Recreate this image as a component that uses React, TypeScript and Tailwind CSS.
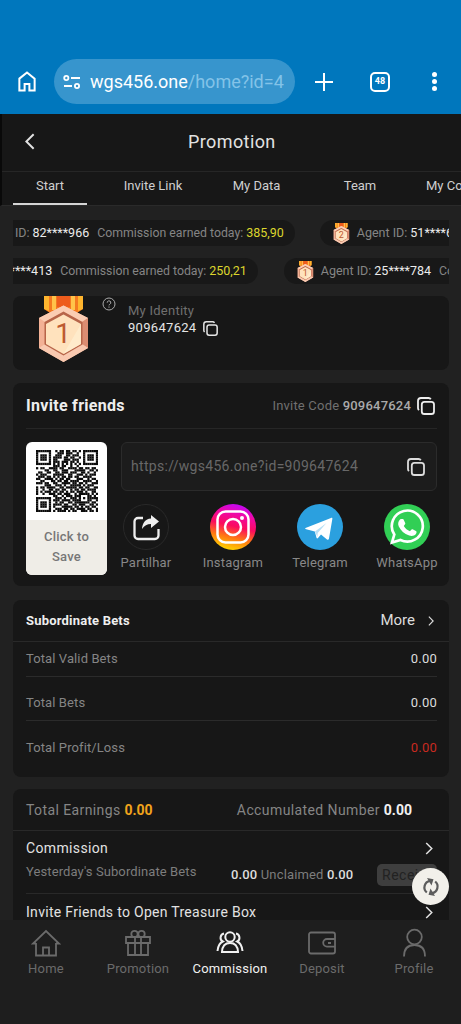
import type { ReactNode } from 'react'

const QR_ROWS = [
  '11111110010110110110101111111',
  '10000010001110111001001000001',
  '10111010011100110111001011101',
  '10111010111101101100101011101',
  '10111010110001110111001011101',
  '10000010111011101101001000001',
  '11111110101010101010101111111',
  '00000000111011001001000000000',
  '10110011110110011110110110110',
  '00001100110011100011111001101',
  '01100110011011101110011010010',
  '10111000111110011001110101110',
  '01110110101011011011001111000',
  '11001111010110110001110010110',
  '00110001101101101111001111001',
  '11101100110011110110110100111',
  '00001110011101001111101011100',
  '10110111100110111110110110011',
  '10010011011011001011011011110',
  '10101110110110101101110100110',
  '10010011101101110010111110101',
  '00000000110010111011100011010',
  '11111110011101001110101011111',
  '10000010111011110111100011001',
  '10111010010110011011111110110',
  '10111010111101100110111001101',
  '10111010100011111011010110110',
  '10000010011101101101111011001',
  '11111110101111010110011101101',
]

function QrCode() {
  return (
    <svg viewBox="0 0 29 29" className="size-[62px]">
      {QR_ROWS.map((row, y) =>
        row.split('').map((cell, x) =>
          cell === '1' ? <rect key={`${x}-${y}`} x={x} y={y} width="1.050" height="1.050" fill="#0a0a0a" /> : null
        )
      )}
    </svg>
  )
}

function CopyIcon({ className }: { className: string }) {
  return (
    <svg viewBox="0 0 18 18" fill="none" stroke="currentColor" strokeWidth="1.8" className={className}>
      <rect x="4.8" y="4.8" width="12.2" height="12.2" rx="2.6" />
      <path d="M1.9 13.2A3 3 0 0 1 1 11V4a3 3 0 0 1 3-3h7.6a2.6 2.6 0 0 1 2.2 1.2" />
    </svg>
  )
}

function Chevron({ className }: { className: string }) {
  return (
    <svg viewBox="0 0 8 14" fill="none" stroke="currentColor" strokeWidth="1.6" className={className}>
      <path d="M1 1l6 6-6 6" />
    </svg>
  )
}

/** Hexagonal rank medal hanging on an orange ribbon */
function Medal({ rank, className }: { rank: number; className: string }) {
  return (
    <svg viewBox="0 0 50 66" className={className}>
      <path d="M5 0h39v13l-6 4H11l-6-4z" fill="#f47a20" />
      <path d="M5 0h5v15l-5-2zM39 0h5v13l-5 2z" fill="#ffb52e" />
      <path d="M13 0h4v14h-4zM32 0h4v14h-4z" fill="#ffc34a" />
      <path d="M18 0h13v11H18z" fill="#ee5c1c" />
      <path d="M24.500 9.500L49 22v30L24.500 66 0 52V22z" fill="#f3b195" />
      <path d="M24.500 9.500L49 22l-6 4-18.500-10L6 26l-6-4z" fill="#fbcdb3" />
      <path d="M49 22v30l-6-4V26z" fill="#dc8d72" />
      <path d="M24.500 66L49 52l-6-4-18.500 11L6 48l-6 4z" fill="#f9c9b0" />
      <path d="M24.500 15.500L43.500 26v22.500L24.500 59.500 5.500 48.500V26z" fill="#b76549" />
      <path d="M24.500 18.500L42 28v20L24.500 58 7 48V28z" fill="#ffe2bd" />
      <path d="M42 28v20L24.500 58z" fill="#fff0d2" opacity=".7" />
      <text x="24" y="47" textAnchor="middle" fontFamily="Roboto, sans-serif" fontSize="28" fontWeight="400" fill="#bd5a30">
        {rank}
      </text>
    </svg>
  )
}

function TickerPill({ rank, id, amount }: { rank: number; id: string; amount: string }) {
  return (
    <div className="flex h-[26px] shrink-0 items-center rounded-full bg-[#181818] pr-[11px] pl-[13px] text-[12.5px] whitespace-nowrap text-[#858585]">
      <Medal rank={rank} className="mr-[7px] h-[21px] w-[17px]" />
      <span>Agent ID:</span>
      <span className="ml-[3px] text-[#ececec]">{id}</span>
      <span className="ml-2 w-[146px] text-[12.3px]">Commission earned today:</span>
      <span className="ml-[3px] text-[#dcd52d]">{amount}</span>
    </div>
  )
}

function Share({ label, children }: { label: string; children: ReactNode }) {
  return (
    <div className="flex w-[64px] flex-col items-center">
      <div className="size-[46px]">{children}</div>
      <span className="mt-px text-[13px] leading-6 tracking-[0.2px] text-[#888]">{label}</span>
    </div>
  )
}

function BetRow({ label, value, className }: { label: string; value: string; className: string }) {
  return (
    <div className={`flex items-center justify-between text-[13px] ${className}`}>
      <span className="tracking-[0.1px] text-[#858585]">{label}</span>
      <span className="tracking-[0.2px]">{value}</span>
    </div>
  )
}

function NavItem({ label, active, children }: { label: string; active?: boolean; children: ReactNode }) {
  return (
    <div className={`flex w-[92px] flex-col items-center ${active ? 'text-[#f1f1f1]' : 'text-[#6b6b6b]'}`}>
      <svg viewBox="0 0 30 30" fill="none" stroke="currentColor" strokeWidth="1.8" className="size-[30px]">
        {children}
      </svg>
      <span className="mt-px text-[13px] leading-5 tracking-[0.2px]">{label}</span>
    </div>
  )
}

function BrowserBar() {
  return (
    <div className="flex h-[114px] shrink-0 items-end bg-[#0077bd] pb-[10px] pl-[17px] text-white">
      <div className="flex h-[45px] items-center">
        <svg viewBox="0 0 20 22" fill="none" stroke="currentColor" strokeWidth="2.100" className="h-[21px] w-5">
          <path d="M2 8l8-6.500L18 8v12.500h-5.500v-7h-5v7H2z" />
        </svg>
        <div className="ml-[17px] flex h-[45px] w-[241px] items-center rounded-full bg-[#3795cd] pl-[9px]">
          <svg viewBox="0 0 18 14" fill="none" stroke="currentColor" strokeWidth="1.800" className="h-[14px] w-[18px]">
            <circle cx="3.300" cy="3" r="2.100" />
            <path d="M8 3h9M1 11h8" />
            <circle cx="14" cy="11" r="2.100" />
          </svg>
          <span className="ml-[9px] text-[18px] whitespace-nowrap">
            wgs456.one<span className="text-[#83c3e8]">/home?id=4</span>
          </span>
        </div>
        <svg viewBox="0 0 18 18" stroke="currentColor" strokeWidth="2" className="ml-5 size-[18px]">
          <path d="M9 0v18M0 9h18" />
        </svg>
        <div className="ml-[37px] flex size-5 items-center justify-center rounded-[5px] border-2 border-white text-[9px] font-bold">48</div>
        <div className="ml-[42px] flex flex-col gap-[2px]">
          <i className="size-[5px] rounded-full bg-white" />
          <i className="size-[5px] rounded-full bg-white" />
          <i className="size-[5px] rounded-full bg-white" />
        </div>
      </div>
    </div>
  )
}

function PageHeader() {
  return (
    <header className="h-[92px] shrink-0 overflow-hidden border-b border-l-2 border-b-[#2a2a2a] border-l-[#090909] bg-[#171717] text-[#e2e2e2]">
      <div className="flex h-[58px] items-center border-b border-[#262626] pb-[2px]">
        <Chevron className="ml-[23px] h-[17px] w-[10px] rotate-180" />
        <h1 className="ml-[153px] text-[18px] tracking-[0.4px]">Promotion</h1>
      </div>
      <nav className="flex h-[33px] text-[13px] whitespace-nowrap text-[#cfcfcf]">
        <span className="ml-[11px] w-[74px] shrink-0 border-b-2 border-[#d5d5d5] pt-1 text-center leading-5">Start</span>
        <span className="w-[132px] shrink-0 pt-1 text-center leading-5">Invite Link</span>
        <span className="w-[75px] shrink-0 pt-1 text-center leading-5">My Data</span>
        <span className="w-[132px] shrink-0 pt-1 text-center leading-5">Team</span>
        <span className="shrink-0 pt-1 leading-5">My Commission</span>
      </nav>
    </header>
  )
}

export default function App() {
  return (
    <div className="relative flex h-[1024px] w-[461px] flex-col overflow-hidden bg-[#212121] font-[Roboto,sans-serif]">
      <BrowserBar />
      <PageHeader />

      <main className="mx-[13px] flex h-[714px] w-[436px] flex-col overflow-hidden pt-[14px]">
        {/* Commission tickers */}
        <div className="flex h-[26px] shrink-0 overflow-hidden">
          <div className="-ml-[71px] flex gap-[25px]">
            <TickerPill rank={1} id="82****966" amount="385,90" />
            <TickerPill rank={2} id="51****620" amount="312,40" />
          </div>
        </div>
        <div className="mt-[12px] flex h-[26px] shrink-0 overflow-hidden">
          <div className="-ml-[108px] flex gap-[26px]">
            <TickerPill rank={3} id="37****413" amount="250,21" />
            <TickerPill rank={1} id="25****784" amount="198,35" />
          </div>
        </div>

        {/* Identity */}
        <section className="mt-[12px] flex h-[74px] shrink-0 rounded-lg bg-[#171717]">
          <Medal rank={1} className="ml-[26px] h-[66px] w-[50px]" />
          <svg viewBox="0 0 14 14" fill="none" stroke="#aaa" className="mt-px ml-[13px] size-[14px]">
            <circle cx="7" cy="7" r="6" />
            <path d="M5.200 5.700a1.800 1.800 0 1 1 2.700 1.500c-.7.400-.9.700-.9 1.200M7 9.500v1.200" />
          </svg>
          <div className="ml-3 pt-[6px] text-[13px] leading-[17px]">
            <p className="tracking-[0.25px] text-[#707070]">My Identity</p>
            <p className="flex items-center tracking-[0.3px] text-[#e5e5e5]">
              909647624
              <CopyIcon className="mt-[2px] ml-[7px] size-[15px]" />
            </p>
          </div>
        </section>

        {/* Invite friends */}
        <section className="mt-[13px] h-[203px] shrink-0 rounded-lg bg-[#171717] pr-3 pl-[13px]">
          <div className="flex h-[46px] items-center border-b border-[#262626] text-[#eee]">
            <h2 className="text-[16px] font-bold tracking-[0.3px]">Invite friends</h2>
            <span className="ml-auto text-[13px] tracking-[0.2px] text-[#707070]">
              Invite Code <b className="font-medium text-[#aaa]">909647624</b>
            </span>
            <CopyIcon className="mr-[2px] ml-[6px] size-[18px]" />
          </div>
          <div className="mt-[13px] flex">
            <div className="flex h-[133px] w-[81px] flex-col items-center overflow-hidden rounded-[6px] bg-white pt-2">
              <QrCode />
              <div className="mt-2 w-full flex-1 bg-[#efede7] pt-[7px] text-center text-[13px] leading-5 font-medium tracking-[0.2px] text-[#777]">
                Click to
                <br />
                Save
              </div>
            </div>
            <div className="ml-[14px] w-[316px]">
              <div className="flex h-[49px] items-center rounded-[6px] border border-[#2b2b2b] bg-[#1c1c1c] pr-[11px] pl-[9px] text-[14px] tracking-[0.3px] text-[#686868]">
                https://wgs456.one?id=909647624
                <CopyIcon className="ml-auto size-[18px] text-[#ddd]" />
              </div>
              <div className="mt-[13px] -mr-[2px] -ml-[7px] flex justify-between">
                <Share label="Partilhar">
                  <svg viewBox="0 0 46 46" fill="none">
                    <circle cx="23" cy="23" r="22.500" stroke="#292929" />
                    <path d="M20 14h-5a3.500 3.500 0 0 0-3.500 3.500v14A3.500 3.500 0 0 0 15 35h17a3.500 3.500 0 0 0 3.500-3.500V25" stroke="#eee" strokeWidth="2.300" />
                    <path d="M28 11l8 6.500-8 6.500v-4c-4 0-6.500 1.500-9 5 .5-6 3-10 9-10.500z" fill="#eee" />
                  </svg>
                </Share>
                <Share label="Instagram">
                  <svg viewBox="0 0 46 46" fill="none" stroke="#fff">
                    <defs>
                      <linearGradient id="ig" x1="0.250" y1="1" x2="0.500" y2="0">
                        <stop offset="0.050" stopColor="#ffd000" />
                        <stop offset="0.300" stopColor="#ff7a12" />
                        <stop offset="0.550" stopColor="#fb0b5f" />
                        <stop offset="0.800" stopColor="#f008a5" />
                        <stop offset="1" stopColor="#c608ef" />
                      </linearGradient>
                    </defs>
                    <circle cx="23" cy="23" r="23" fill="url(#ig)" stroke="none" />
                    <rect x="7.500" y="7.500" width="31" height="31" rx="8" strokeWidth="2.500" />
                    <circle cx="23" cy="23" r="8" strokeWidth="2.500" />
                    <circle cx="32" cy="14" r="2" fill="#fff" stroke="none" />
                  </svg>
                </Share>
                <Share label="Telegram">
                  <svg viewBox="0 0 46 46">
                    <circle cx="23" cy="23" r="23" fill="#2ba0df" />
                    <path d="M8.500 24L34 14c1-.4 1.600 0 1.300 1.300L32 34.500c-.2 1.200-1 1.400-2 .9l-6-4.800-3 3.500c-.6.600-1.300.5-1.500-.4l-1.700-6.200-8.600-2.300c-1.200-.4-1.200-.9-.7-1.200z" fill="#fff" />
                    <path d="M18 27.500L29.500 19 20.700 29l-.3 4z" fill="#b6dff5" />
                  </svg>
                </Share>
                <Share label="WhatsApp">
                  <svg viewBox="0 0 46 46">
                    <circle cx="23" cy="23" r="23" fill="#31cf55" />
                    <path d="M8 38.500l2.300-8A15.500 15.500 0 1 1 16.500 36z" fill="none" stroke="#fff" strokeWidth="2.700" />
                    <path d="M18.500 15c.7 0 1 .2 1.300.9l1.400 3.200c.3.700.1 1.200-1.400 2.900 1.500 2.600 3.500 4.200 6.200 5.300 1.600-1.900 1.800-2.300 2.600-2l3.300 1.600c1.100.5.8 2-.2 3.300-1.300 1.600-3.900 2.200-6.500 1.300-5-1.600-8.500-5-10.400-9-1.200-2.700-.6-5.300 1.200-7 .7-.5 1.500-.6 2.500-.5z" fill="#fff" />
                  </svg>
                </Share>
              </div>
            </div>
          </div>
        </section>

        {/* Subordinate bets */}
        <section className="mt-[14px] h-[177px] shrink-0 rounded-lg bg-[#171717] text-[#ddd]">
          <div className="flex h-[42px] items-center border-b border-[#292929] pr-[15px] pl-[13px]">
            <h2 className="text-[13px] font-bold tracking-[0.2px] text-[#eee]">Subordinate Bets</h2>
            <span className="ml-auto text-[15px]">More</span>
            <Chevron className="ml-[13px] h-[10px] w-[6px]" />
          </div>
          <div className="pr-3 pl-[13px]">
            <BetRow label="Total Valid Bets" value="0.00" className="h-[35px] border-b border-[#2b2b2b]" />
            <BetRow label="Total Bets" value="0.00" className="h-11 border-b border-[#2b2b2b] pt-2" />
            <BetRow label="Total Profit/Loss" value="0.00" className="h-[46px] pt-2 text-[#c92a20]" />
          </div>
        </section>

        {/* Earnings */}
        <section className="mt-3 h-[180px] shrink-0 rounded-lg bg-[#171717] text-[#e2e2e2]">
          <div className="flex h-[42px] items-center border-b border-[#292929] pt-px pr-3 pl-[13px] text-[14px] tracking-[0.4px] text-[#858585]">
            <span>
              Total Earnings <b className="tracking-normal text-[#f0a31c]">0.00</b>
            </span>
            <span className="mr-[25px] ml-auto">
              Accumulated Number <b className="tracking-normal text-[#f1f1f1]">0.00</b>
            </span>
          </div>
          <div className="pr-3 pl-[13px]">
            <div className="h-[63px] border-b border-[#292929] pt-[7px]">
              <div className="flex h-5 items-center justify-between pr-1">
                <h3 className="text-[14px] tracking-[0.35px]">Commission</h3>
                <Chevron className="h-[13px] w-2" />
              </div>
              <div className="flex text-[13px] leading-[22px] whitespace-nowrap text-[#7d7d7d]">
                <span className="mt-[3px] w-[205px] tracking-[0.1px]">Yesterday's Subordinate Bets</span>
                <span className="mt-[6px] tracking-[0.15px]">
                  <b className="font-medium text-[#ddd]">0.00</b> Unclaimed <b className="font-medium text-[#ddd]">0.00</b>
                </span>
                <span className="mt-[6px] ml-auto h-[22px] w-[60px] rounded-[5px] bg-[#3e3e3e] pl-[5px] text-[14px] tracking-[0.5px] text-[#222]">Receive</span>
              </div>
            </div>
            <div className="flex h-9 items-center justify-between pr-1">
              <h3 className="text-[14px] tracking-[0.3px]">Invite Friends to Open Treasure Box</h3>
              <Chevron className="h-[13px] w-2" />
            </div>
          </div>
        </section>
      </main>

      {/* Floating refresh */}
      <div className="absolute top-[868px] left-[412px] flex size-[37px] items-center justify-center rounded-full bg-[#f2f0ea]">
        <svg viewBox="0 0 18 18" fill="none" stroke="#5c5c5c" strokeWidth="2.200" className="size-[18px]">
          <path d="M4.800 14.500A6.700 6.700 0 0 1 8 2.800M13.200 3.500A6.700 6.700 0 0 1 10 15.200" />
          <path d="M5 0L11.500 1.200 9.500 7.500zM13 18L6.500 16.800 8.500 10.500z" fill="#5c5c5c" stroke="none" />
        </svg>
      </div>

      <footer className="flex h-[104px] shrink-0 bg-[#1e1e1e] pt-2">
        <NavItem label="Home">
          <path d="M5 15.500H2L15 3l13 12.500h-3M5 15v12.500h20V15M12 27.500v-8h6v8" />
        </NavItem>
        <NavItem label="Promotion">
          <path d="M3 9h24v6H3zM5 15v12h20V15M12 9v18M18 9v18" />
          <circle cx="11.500" cy="6" r="3.200" />
          <circle cx="18.500" cy="6" r="3.200" />
        </NavItem>
        <NavItem label="Commission" active>
          <g strokeWidth="2">
            <circle cx="15" cy="9" r="4.700" />
            <path d="M7 24c.3-6 3-9 8-9s7.700 3 8 9z" />
            <path d="M9 5.500a4.300 4.300 0 0 0-1.200 8C4.500 15 3 18 2.500 23M21 5.500a4.300 4.300 0 0 1 1.200 8c3.300 1.500 4.800 4.500 5.300 9.500" />
          </g>
        </NavItem>
        <NavItem label="Deposit">
          <rect x="2" y="4.500" width="26" height="21" rx="2" />
          <path d="M28 11h-8a3.800 3.800 0 0 0 0 7.600h8M21 15h3" />
        </NavItem>
        <NavItem label="Profile">
          <circle cx="15.500" cy="9" r="7.300" />
          <path d="M5 28.500C5 21 9 17 15.500 17S26 21 26 28.500" />
        </NavItem>
      </footer>
    </div>
  )
}
